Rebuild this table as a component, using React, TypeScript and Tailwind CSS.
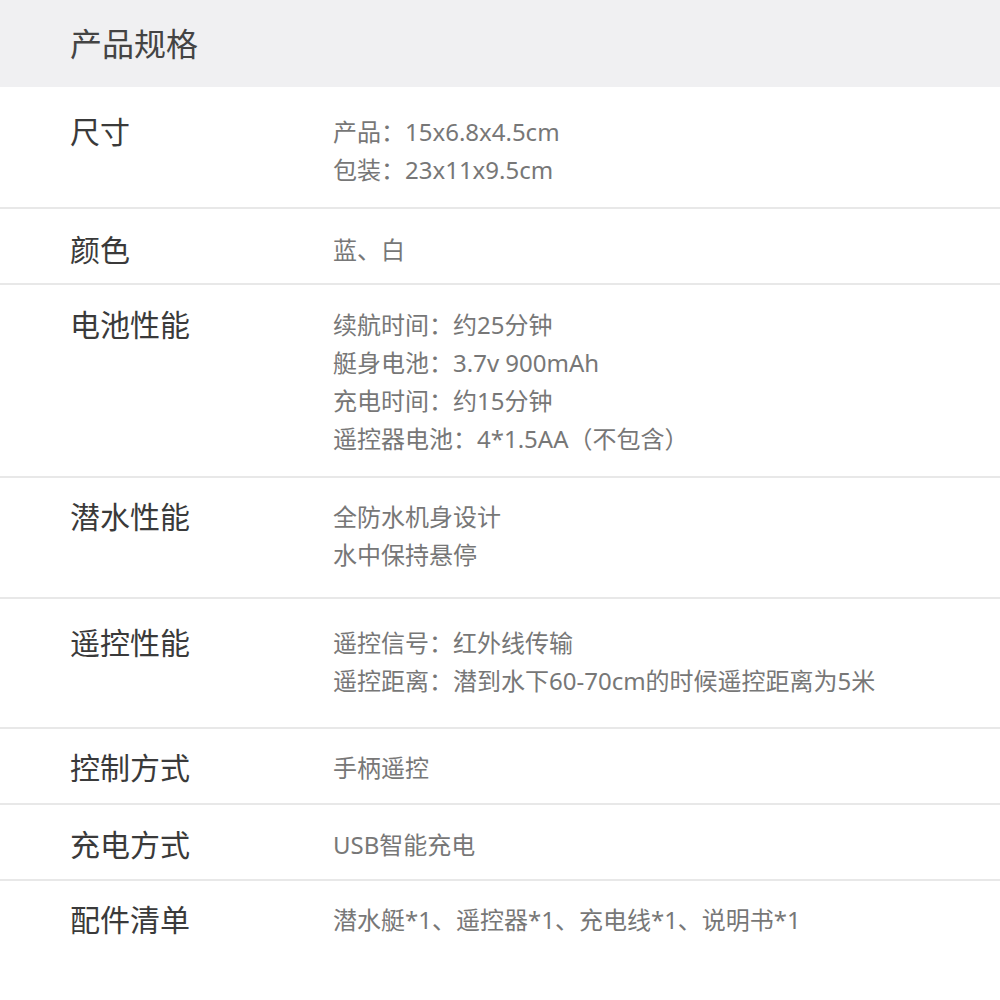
const rows = [
  { label: '尺寸', lines: ['产品：15x6.8x4.5cm', '包装：23x11x9.5cm'], box: 'h-[122px] pt-[26px]' },
  { label: '颜色', lines: ['蓝、白'], box: 'h-[76px] pt-[22px]' },
  {
    label: '电池性能',
    lines: ['续航时间：约25分钟', '艇身电池：3.7v 900mAh', '充电时间：约15分钟', '遥控器电池：4*1.5AA（不包含）'],
    box: 'h-[193px] pt-[21px]',
  },
  { label: '潜水性能', lines: ['全防水机身设计', '水中保持悬停'], box: 'h-[121px] pt-[20px]' },
  { label: '遥控性能', lines: ['遥控信号：红外线传输', '遥控距离：潜到水下60-70cm的时候遥控距离为5米'], box: 'h-[130px] pt-[25px]' },
  { label: '控制方式', lines: ['手柄遥控'], box: 'h-[76px] pt-[20px]' },
  { label: '充电方式', lines: ['USB智能充电'], box: 'h-[76px] pt-[21px]' },
  { label: '配件清单', lines: ['潜水艇*1、遥控器*1、充电线*1、说明书*1'], box: 'h-[119px] pt-[20px]' },
]

export default function App() {
  return (
    <div className="w-[1000px] h-[1000px] bg-white font-['Noto_Sans','Noto_Sans_CJK_SC',sans-serif] overflow-hidden">
      <div className="h-[87px] bg-[#f0f0f2] flex items-center pl-[70px] text-[32px] text-[#444]">产品规格</div>
      {rows.map((r, i) => (
        <div key={r.label} className={`flex ${r.box} ${i < rows.length - 1 ? 'border-b-2 border-[#e8e8e8]' : ''}`}>
          <div className="w-[333px] pl-[70px] text-[30px] leading-[38px] text-[#3a3a3a]">{r.label}</div>
          <div className="flex flex-col text-[24px] leading-[38px] text-[#777]">
            {r.lines.map((l) => (
              <div key={l}>{l}</div>
            ))}
          </div>
        </div>
      ))}
    </div>
  )
}
